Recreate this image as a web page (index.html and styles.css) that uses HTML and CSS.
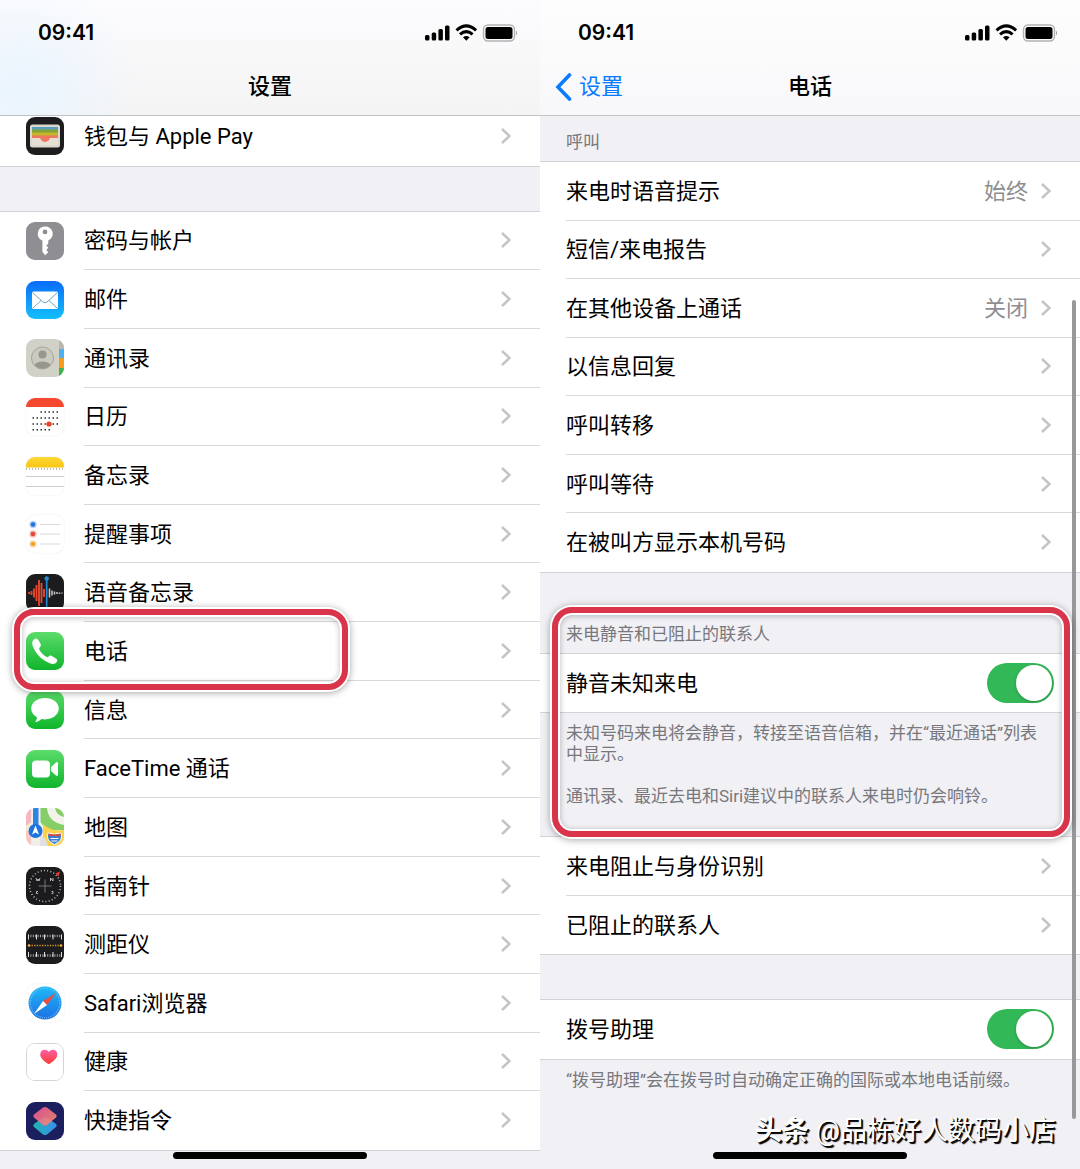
FILE: index.html
```html
<!DOCTYPE html>
<html lang="zh-CN">
<head>
    <meta charset="UTF-8">
    <meta name="viewport" content="width=device-width, initial-scale=1.0">
    <title>设置 - 电话</title>
    <link rel="stylesheet" href="styles.css">
</head>
<body>
    <!-- Shared symbols -->
    <svg class="defs" width="0" height="0" aria-hidden="true">
        <defs>
            <linearGradient id="green" x1="0" y1="0" x2="0" y2="1">
                <stop offset="0" stop-color="#5bdc6b"/>
                <stop offset="1" stop-color="#0fb52c"/>
            </linearGradient>
            <linearGradient id="blue" x1="0" y1="0" x2="0" y2="1">
                <stop offset="0" stop-color="#0a6cf9"/>
                <stop offset="1" stop-color="#13c0fd"/>
            </linearGradient>
            <linearGradient id="safari" x1="0" y1="0" x2="0" y2="1">
                <stop offset="0" stop-color="#1fb9f8"/>
                <stop offset="1" stop-color="#1c70e4"/>
            </linearGradient>
            <linearGradient id="heart" x1="0" y1="0" x2="0" y2="1">
                <stop offset="0" stop-color="#fb5fa6"/>
                <stop offset="1" stop-color="#fc3c2f"/>
            </linearGradient>
            <linearGradient id="layer-top" x1="0" y1="0" x2="1" y2="1">
                <stop offset="0" stop-color="#f0559a"/>
                <stop offset="1" stop-color="#f68e6a"/>
            </linearGradient>
            <linearGradient id="layer-bottom" x1="0" y1="0" x2="1" y2="0">
                <stop offset="0" stop-color="#1fb5b0"/>
                <stop offset="1" stop-color="#3b8df0"/>
            </linearGradient>
            <linearGradient id="yellow" x1="0" y1="0" x2="0" y2="1">
                <stop offset="0" stop-color="#fdd835"/>
                <stop offset="1" stop-color="#f9c514"/>
            </linearGradient>
        </defs>
        <symbol id="chevron" viewBox="0 0 12 18">
            <path d="M2 2l7.500 7L2 16" fill="none" stroke="#c4c4c7" stroke-width="2.400"/>
        </symbol>
        <symbol id="status" viewBox="0 0 92 18">
            <rect x="0" y="11" width="4.500" height="5.500" rx="1.500"/>
            <rect x="6.700" y="8.500" width="4.500" height="8" rx="1.500"/>
            <rect x="13.400" y="5" width="4.500" height="11.500" rx="1.500"/>
            <rect x="20" y="1.500" width="4.500" height="15" rx="1.500"/>
            <path d="M31.500 6.300q9.800-8.800 19.600 0M35 10.400q6.300-5.600 12.600 0" fill="none" stroke="#000" stroke-width="3"/>
            <path d="M38 13.300q3.300-2.800 6.600 0l-3.300 3.400z"/>
            <rect x="58.500" y="1" width="31" height="16" rx="4.500" fill="none" stroke="#b2b2b5" stroke-width="1.400"/>
            <rect x="60.500" y="3" width="27" height="12" rx="2.500"/>
            <path d="M91 6.500q2 2.500 0 5z" fill="#9b9b9e"/>
        </symbol>
    </svg>

    <div class="screens">
        <section class="phone">
            <header class="nav nav-tinted">
                <div class="status">
                    <span>09:41</span>
                    <svg class="status-icons"><use href="#status"/></svg>
                </div>
                <div class="title-bar">
                    <h1>设置</h1>
                </div>
            </header>

            <a class="row row-under" href="#">
                <svg class="icon" viewBox="0 0 38 38">
                    <rect width="38" height="38" fill="#1d1c1e"/>
                    <rect x="4" y="7.500" width="30" height="23" rx="2.500" fill="#dcd8cf"/>
                    <path d="M6 10h26v4H6z" fill="#5aa0bd"/>
                    <path d="M6 12.500h26V17H6z" fill="#85a33a"/>
                    <path d="M6 15.500h26V20H6z" fill="#c5b52b"/>
                    <path d="M6 18.500h26v2.500h-8q-1 4-5 4t-5-4H6z" fill="#f0765f"/>
                    <path d="M6 21h8q1 4 5 4t5-4h8v7H6z" fill="#e6dfd4"/>
                </svg>
                <span class="row-body"><span class="label">钱包与 Apple Pay</span><svg class="chevron"><use href="#chevron"/></svg></span>
            </a>

            <div class="gap"></div>

            <a class="row" href="#">
                <svg class="icon" viewBox="0 0 38 38">
                    <rect width="38" height="38" fill="#8e8e93"/>
                    <path fill="#fff" fill-rule="evenodd" d="M19 4.500a7.300 7.300 0 0 0-2.600 14.100V30l2.800 3.200 3.100-3-2-2.200 2-2.200-2-2.300 2-2v-3A7.300 7.300 0 0 0 19 4.500zm0 3a2.400 2.400 0 1 1 0 4.800 2.400 2.400 0 0 1 0-4.800z"/>
                </svg>
                <span class="row-body"><span class="label">密码与帐户</span><svg class="chevron"><use href="#chevron"/></svg></span>
            </a>
            <a class="row" href="#">
                <svg class="icon" viewBox="0 0 38 38">
                    <rect width="38" height="38" fill="url(#blue)"/>
                    <rect x="6" y="10.500" width="26" height="17.500" rx="1.500" fill="#fff"/>
                    <path d="M6.500 11.500l10.500 9.500q2 1.600 4 0l10.500-9.500M6.500 27.500l8.500-8M31.500 27.500l-8.500-8" fill="none" stroke="#6aa5c4" stroke-width="1"/>
                </svg>
                <span class="row-body"><span class="label">邮件</span><svg class="chevron"><use href="#chevron"/></svg></span>
            </a>
            <a class="row" href="#">
                <svg class="icon" viewBox="0 0 38 38">
                    <rect width="38" height="38" fill="#d2d1c7"/>
                    <path d="M33 0h5v10h-5z" fill="#b9b8ae"/>
                    <path d="M33 10h5v9h-5z" fill="#4fb0ef"/>
                    <path d="M33 19h5v10h-5z" fill="#f79a1d"/>
                    <path d="M33 29h5v9h-5z" fill="#3fb54e"/>
                    <circle cx="16.500" cy="19" r="11" fill="#cbcac0" stroke="#a5a49c"/>
                    <circle cx="16.500" cy="15.500" r="4" fill="#98978f"/>
                    <path d="M8.500 26q2-3.500 8-3.500t8 3.500q-3 3.700-8 3.700T8.500 26z" fill="#98978f"/>
                </svg>
                <span class="row-body"><span class="label">通讯录</span><svg class="chevron"><use href="#chevron"/></svg></span>
            </a>
            <a class="row" href="#">
                <svg class="icon icon-light" viewBox="0 0 38 38">
                    <rect width="38" height="38" fill="#fff"/>
                    <path d="M0 0h38v9H0z" fill="#f5482f"/>
                    <path d="M14.500 14H32M6.500 20H32M6.500 26H32M6.500 31.800H24" stroke="#2a2a2a" stroke-width="1.500" stroke-dasharray="1.500 2.500" fill="none"/>
                    <path d="M18 26h9" stroke="#f0957f"/>
                    <circle cx="23" cy="26" r="2.600" fill="#e8432c"/>
                </svg>
                <span class="row-body"><span class="label">日历</span><svg class="chevron"><use href="#chevron"/></svg></span>
            </a>
            <a class="row" href="#">
                <svg class="icon icon-light" viewBox="0 0 38 38">
                    <rect width="38" height="38" fill="#fff"/>
                    <path d="M0 0h38v10.500H0z" fill="url(#yellow)"/>
                    <path d="M0 12h38" stroke="#a9a69b" stroke-width="1.500" stroke-dasharray="1 2"/>
                    <path d="M0 19.500h38M0 29.500h38" stroke="#cfcfcf"/>
                </svg>
                <span class="row-body"><span class="label">备忘录</span><svg class="chevron"><use href="#chevron"/></svg></span>
            </a>
            <a class="row" href="#">
                <svg class="icon icon-light" viewBox="0 0 38 38">
                    <rect width="38" height="38" fill="#fff"/>
                    <path d="M14 9.500h20M14 19h20M14 29h20" stroke="#d8d8da"/>
                    <circle cx="7" cy="9.500" r="3.700" fill="#b7d3f5"/>
                    <circle cx="7" cy="9.500" r="2.300" fill="#2472d8"/>
                    <circle cx="7" cy="19" r="3.700" fill="#f6c2bb"/>
                    <circle cx="7" cy="19" r="2.300" fill="#e14a3a"/>
                    <circle cx="7" cy="29" r="3.700" fill="#fae0b4"/>
                    <circle cx="7" cy="29" r="2.300" fill="#f0a32f"/>
                </svg>
                <span class="row-body"><span class="label">提醒事项</span><svg class="chevron"><use href="#chevron"/></svg></span>
            </a>
            <a class="row" href="#">
                <svg class="icon" viewBox="0 0 38 38">
                    <rect width="38" height="38" fill="#1c1c1e"/>
                    <path d="M3 18v2M5.500 17v4M8 14.500v9M10.500 11v16M13 6v26M15.500 9v20M18 15v8" stroke="#e4472f" stroke-width="1.900"/>
                    <path d="M23.500 14.500v9M26 16.500v5M28.500 17.500v3M31 18v2M33.500 18.500v1.500M36 18.500v1" stroke="#c9c9cc" stroke-width="1.500"/>
                    <path d="M20.700 4v34" stroke="#2589d6" stroke-width="1.700"/>
                    <circle cx="20.700" cy="4.500" r="2.200" fill="#2589d6"/>
                </svg>
                <span class="row-body"><span class="label">语音备忘录</span><svg class="chevron"><use href="#chevron"/></svg></span>
            </a>
            <a class="row" href="#">
                <svg class="icon" viewBox="0 0 38 38">
                    <rect width="38" height="38" fill="url(#green)"/>
                    <path fill="#fff" d="M8 7.200c1.500-1.300 3.300-1 4.300.7l2.300 4.200c.7 1.300.2 2.200-.8 3.200-.9.900-.8 1.800-.1 3 1.300 2.200 3.400 4.400 5.700 6 1.300.9 2.300 1 3.200.1 1-1 1.900-1.300 3.200-.5l4.200 2.700c1.500 1 1.600 2.500.4 3.900-1.900 2-4.300 1.700-7.200.4C15 27.500 9.200 21 6.800 14c-.8-2.600-1-5 1.200-6.800z"/>
                </svg>
                <span class="row-body"><span class="label">电话</span><svg class="chevron"><use href="#chevron"/></svg></span>
                <span class="highlight highlight-phone"></span>
            </a>
            <a class="row" href="#">
                <svg class="icon" viewBox="0 0 38 38">
                    <rect width="38" height="38" fill="url(#green)"/>
                    <path fill="#fff" d="M19 7C11.300 7 5.200 11.600 5.200 17.600c0 3.700 2.200 6.800 5.800 8.700 0 1.900-.8 3.500-2 4.700 2.700-.2 4.900-1.300 6.300-3 1.200.3 2.400.4 3.700.4 7.700 0 13.800-4.800 13.800-10.800S26.700 7 19 7z"/>
                </svg>
                <span class="row-body"><span class="label">信息</span><svg class="chevron"><use href="#chevron"/></svg></span>
            </a>
            <a class="row" href="#">
                <svg class="icon" viewBox="0 0 38 38">
                    <rect width="38" height="38" fill="url(#green)"/>
                    <rect x="6" y="10.500" width="18" height="17" rx="4" fill="#fff"/>
                    <path d="M25 17l5-4.500q2-1.200 2 1v11q0 2.200-2 1L25 21z" fill="#fff"/>
                </svg>
                <span class="row-body"><span class="label">FaceTime 通话</span><svg class="chevron"><use href="#chevron"/></svg></span>
            </a>
            <a class="row" href="#">
                <svg class="icon" viewBox="0 0 38 38">
                    <rect width="38" height="38" fill="#f1efe8"/>
                    <path d="M0 0h6v38H0z" fill="#f4ead0"/>
                    <path d="M0 3l5-3v14l-5 4z" fill="#f3b9c0"/>
                    <path d="M0 22l5 3v13H0z" fill="#f7c8c4"/>
                    <path d="M14.500 0H38v22H20L14.500 14z" fill="#86cf68"/>
                    <path d="M21 0h8q1 7 9 9v8Q22 14 21 0z" fill="#f4f3ea"/>
                    <path d="M17 16q8 8 21 6v16H17z" fill="#fbd04a"/>
                    <path d="M14 26q6 3 8 12h-8z" fill="#dfe0df"/>
                    <path d="M7 0h5.500v22H7z" fill="#2d83e6"/>
                    <circle cx="9.500" cy="23" r="7" fill="#1f74dc"/>
                    <path d="M9.500 17.500l3.500 9-3.500-2-3.500 2z" fill="#fff"/>
                    <path d="M22 25q6.500 2.500 13 0 2.500 8-6.500 11.500Q19.500 33 22 25z" fill="#3a7fd0" stroke="#fff"/>
                    <path d="M22.500 25.500q6 2 12 0v2.500h-12z" fill="#d9483b"/>
                    <path d="M24.500 30.500h8M25.500 33h6" stroke="#fff"/>
                </svg>
                <span class="row-body"><span class="label">地图</span><svg class="chevron"><use href="#chevron"/></svg></span>
            </a>
            <a class="row" href="#">
                <svg class="icon" viewBox="0 0 38 38">
                    <rect width="38" height="38" fill="#1b1b1d"/>
                    <circle cx="19" cy="19" r="15.500" fill="none" stroke="#bdbdc0" stroke-width="1.500" stroke-dasharray="1 2.250"/>
                    <path d="M19 12.500v13M12.500 19h13" stroke="#77777a"/>
                    <path d="M10 11l1 3 1-2 1 2 1-3M24.500 14v-3l2.500 3v-3M12 24.500h-1.500v2H12M25.500 24.500h1.500v2h-1.500" fill="none" stroke="#c9c9cc" stroke-width=".9"/>
                    <path d="M29.500 6.500l4.500-2-1.500 5z" fill="#e8412f"/>
                </svg>
                <span class="row-body"><span class="label">指南针</span><svg class="chevron"><use href="#chevron"/></svg></span>
            </a>
            <a class="row" href="#">
                <svg class="icon" viewBox="0 0 38 38">
                    <rect width="38" height="38" fill="#1c1c1e"/>
                    <path d="M2 10h34M2 29.500h34" stroke="#a9a9ac" stroke-width="2.500" stroke-dasharray="1 1.400"/>
                    <path d="M2.500 8.500v5M10.500 8.500v5M18.500 8.500v5M27 8.500v5M35.500 8.500v5M2.500 26v5M10.500 26v5M18.500 26v5M27 26v5M35.500 26v5" stroke="#dededf"/>
                    <path d="M3 19.500h32" stroke="#d99a2b" stroke-width="1.300" stroke-dasharray="1.300 1.300"/>
                    <circle cx="3" cy="19.500" r="1.300" fill="#f6b133"/>
                    <circle cx="35" cy="19.500" r="1.300" fill="#f6b133"/>
                </svg>
                <span class="row-body"><span class="label">测距仪</span><svg class="chevron"><use href="#chevron"/></svg></span>
            </a>
            <a class="row" href="#">
                <svg class="icon icon-light" viewBox="0 0 38 38">
                    <rect width="38" height="38" fill="#fff"/>
                    <circle cx="19" cy="19" r="16.500" fill="url(#safari)"/>
                    <circle cx="19" cy="19" r="14.800" fill="none" stroke="#8fd0f8" stroke-width="1.500" stroke-dasharray=".6 1.340"/>
                    <path d="M30 9L17 17l4 4z" fill="#ef4b3e"/>
                    <path d="M8 30l9-13 4 4z" fill="#fff"/>
                </svg>
                <span class="row-body"><span class="label">Safari浏览器</span><svg class="chevron"><use href="#chevron"/></svg></span>
            </a>
            <a class="row" href="#">
                <svg class="icon icon-health" viewBox="0 0 38 38">
                    <rect width="38" height="38" fill="#fff"/>
                    <path d="M23 21.500C17 17.500 14 14.500 14 11c0-3 2-5 4.600-5 1.800 0 3.400.9 4.400 2.500C24 6.900 25.600 6 27.400 6 30 6 32 8 32 11c0 3.500-3 6.500-9 10.500z" fill="url(#heart)"/>
                </svg>
                <span class="row-body"><span class="label">健康</span><svg class="chevron"><use href="#chevron"/></svg></span>
            </a>
            <a class="row row-last" href="#">
                <svg class="icon" viewBox="0 0 38 38">
                    <rect width="38" height="38" fill="#1b1f5e"/>
                    <path d="M17 15.500q2-1 4 0l9 6.500q1.500 1.500 0 3l-9 7.500q-2 1.200-4 0L8 25q-1.500-1.500 0-3z" fill="url(#layer-bottom)"/>
                    <path d="M17 5.500q2-1 4 0l9 7q1.500 1.500 0 3L21 23q-2 1.200-4 0l-9-7.500q-1.500-1.500 0-3z" fill="url(#layer-top)" opacity=".9"/>
                </svg>
                <span class="row-body"><span class="label">快捷指令</span><svg class="chevron"><use href="#chevron"/></svg></span>
            </a>

            <footer class="bottom bottom-short"></footer>
            <div class="home-bar"></div>
        </section>

        <section class="phone">
            <header class="nav">
                <div class="status">
                    <span>09:41</span>
                    <svg class="status-icons"><use href="#status"/></svg>
                </div>
                <div class="title-bar">
                    <a class="back" href="#">
                        <svg class="back-arrow" viewBox="0 0 18 28"><path d="M15.500 2L4 14l11.500 12" fill="none" stroke="#0a7aff" stroke-width="3.600" stroke-linecap="round"/></svg>
                        <span>设置</span>
                    </a>
                    <h1>电话</h1>
                </div>
            </header>

            <h2 class="section-title">呼叫</h2>
            <a class="row" href="#"><span class="row-body"><span class="label">来电时语音提示</span><span class="value">始终</span><svg class="chevron"><use href="#chevron"/></svg></span></a>
            <a class="row" href="#"><span class="row-body"><span class="label">短信/来电报告</span><svg class="chevron"><use href="#chevron"/></svg></span></a>
            <a class="row" href="#"><span class="row-body"><span class="label">在其他设备上通话</span><span class="value">关闭</span><svg class="chevron"><use href="#chevron"/></svg></span></a>
            <a class="row" href="#"><span class="row-body"><span class="label">以信息回复</span><svg class="chevron"><use href="#chevron"/></svg></span></a>
            <a class="row" href="#"><span class="row-body"><span class="label">呼叫转移</span><svg class="chevron"><use href="#chevron"/></svg></span></a>
            <a class="row" href="#"><span class="row-body"><span class="label">呼叫等待</span><svg class="chevron"><use href="#chevron"/></svg></span></a>
            <a class="row row-last" href="#"><span class="row-body"><span class="label">在被叫方显示本机号码</span><svg class="chevron"><use href="#chevron"/></svg></span></a>

            <h2 class="section-title section-title-tall">来电静音和已阻止的联系人</h2>
            <div class="row row-last">
                <div class="row-body">
                    <label class="label" for="silence">静音未知来电</label>
                    <input class="switch" type="checkbox" id="silence" checked>
                </div>
                <span class="highlight highlight-silence"></span>
            </div>
            <div class="note note-silence">
                <p>未知号码来电将会静音，转接至语音信箱，并在“最近通话”列表中显示。</p>
                <p>通讯录、最近去电和Siri建议中的联系人来电时仍会响铃。</p>
            </div>

            <a class="row" href="#"><span class="row-body"><span class="label">来电阻止与身份识别</span><svg class="chevron"><use href="#chevron"/></svg></span></a>
            <a class="row row-last" href="#"><span class="row-body"><span class="label">已阻止的联系人</span><svg class="chevron"><use href="#chevron"/></svg></span></a>

            <div class="gap"></div>

            <div class="row row-last">
                <div class="row-body">
                    <label class="label" for="dial-assist">拨号助理</label>
                    <input class="switch" type="checkbox" id="dial-assist" checked>
                </div>
            </div>
            <footer class="note bottom">
                <p>“拨号助理”会在拨号时自动确定正确的国际或本地电话前缀。</p>
            </footer>

            <div class="scrollbar"></div>
            <div class="watermark"><b>头条</b> @品栋好人数码小店</div>
            <div class="home-bar"></div>
        </section>
    </div>
</body>
</html>
```
FILE: styles.css
```css
* {
    box-sizing: border-box;
}
body {
    margin: 0;
    background-color: #f0f0f5;
    color: #000;
    font-family: Roboto, "Noto Sans CJK SC", sans-serif;
    font-size: 22px;
    line-height: 30px;
}
a {
    color: inherit;
    text-decoration: none;
}
h1, h2, p {
    margin: 0;
}
.defs {
    position: absolute;
}
.screens {
    display: flex;
    min-height: 100vh;
}
.phone {
    position: relative;
    display: flex;
    flex: 1;
    flex-direction: column;
    min-width: 0;
    background-color: #f0f0f5;
    overflow: hidden;
}

/* Navigation bar */
.nav {
    position: relative;
    z-index: 2;
    height: 116px;
    border-bottom: 1px solid #c3c3c6;
    background: linear-gradient(#fdfdfe, #f8f8fa);
}
.nav-tinted {
    background: radial-gradient(circle at 4% 78%, #eaf5ff, rgba(234, 245, 255, 0) 22%), linear-gradient(#fcfcfe, #f4f4f5);
}
.status {
    display: flex;
    justify-content: space-between;
    align-items: center;
    height: 64px;
    padding: 2px 23px 0 38px;
    font-family: Inter, sans-serif;
    font-size: 21px;
    font-weight: 600;
}
.status-icons {
    width: 92px;
    height: 18px;
}
.title-bar {
    position: relative;
    display: flex;
    justify-content: center;
    align-items: center;
    height: 46px;
}
h1 {
    font-size: 22px;
    font-weight: 500;
}
.back {
    position: absolute;
    left: 14px;
    display: flex;
    align-items: center;
    gap: 7px;
    color: #0a7aff;
}
.back-arrow {
    width: 18px;
    height: 28px;
}

/* List rows */
.row {
    position: relative;
    display: flex;
    flex: 1 0 58px;
    align-items: center;
    gap: 20px;
    padding-left: 26px;
    background-color: #fff;
}
.row-under {
    margin-top: -9px;
}
.row-body {
    display: flex;
    flex: 1;
    align-self: stretch;
    align-items: center;
    gap: 12px;
    padding-right: 26px;
    border-bottom: 1px solid #d9d9dc;
}
.row-last .row-body,
.row-under .row-body {
    border-bottom-color: transparent;
}
.label {
    flex: 1;
    padding-top: 2px;
}
.value {
    padding-top: 2px;
    color: #8e8e92;
}
.chevron {
    width: 12px;
    height: 18px;
    margin-right: 2px;
}
.icon {
    flex: none;
    width: 38px;
    height: 38px;
    border-radius: 9px;
}
.icon-light {
    box-shadow: 0 0 1px #c8c8ca;
}
.icon-health {
    border: 1px solid #d5d5d8;
}
.gap {
    height: 46px;
    border-top: 1px solid #d3d3d7;
    border-bottom: 1px solid #d3d3d7;
}
.section-title {
    display: flex;
    align-items: flex-end;
    height: 46px;
    padding: 0 26px 8px;
    border-bottom: 1px solid #d3d3d7;
    color: #77777c;
    font-size: 17px;
    font-weight: 400;
    line-height: 21px;
}
.section-title-tall {
    height: 82px;
    border-top: 1px solid #d3d3d7;
}
.note {
    padding: 10px 26px 0;
    border-top: 1px solid #d3d3d7;
    color: #77777c;
    font-size: 17px;
    line-height: 21px;
}
.note p + p {
    margin-top: 21px;
}
.note-silence {
    padding-bottom: 29px;
    border-bottom: 1px solid #d3d3d7;
}
.bottom {
    height: 110px;
}
.bottom-short {
    height: 19px;
    border-top: 1px solid #d3d3d7;
}

/* Switch */
.switch {
    appearance: none;
    display: flex;
    width: 67px;
    height: 40px;
    margin: 0;
    padding: 2px;
    border-radius: 20px;
    background-color: #d9d9dc;
    cursor: pointer;
}
.switch::before {
    content: "";
    width: 36px;
    height: 36px;
    border-radius: 50%;
    background-color: #fff;
    box-shadow: 0 1px 3px rgba(0, 0, 0, 0.25);
}
.switch:checked {
    justify-content: flex-end;
    background-color: #33b857;
}

/* Red marker frames */
.highlight {
    position: absolute;
    z-index: 1;
    border: 6px solid #d93449;
    border-radius: 20px;
    box-shadow: 0 0 0 2px #fff, 0 1px 7px 2px rgba(0, 0, 0, 0.35), inset 0 0 0 2px #fff, inset 0 1px 5px 3px rgba(0, 0, 0, 0.2);
    pointer-events: none;
}
.highlight-phone {
    top: -13px;
    bottom: -9px;
    left: 14px;
    width: 334px;
}
.highlight-silence {
    top: -47px;
    right: 10px;
    bottom: -125px;
    left: 12px;
}

/* Overlays */
.scrollbar {
    position: absolute;
    top: 300px;
    right: 4px;
    bottom: 50px;
    width: 4px;
    border-radius: 2px;
    background-color: #98989b;
}
.home-bar {
    position: absolute;
    bottom: 10px;
    left: 50%;
    width: 194px;
    height: 7px;
    margin-left: -97px;
    border-radius: 4px;
    background-color: #000;
}
.watermark {
    position: absolute;
    right: 24px;
    bottom: 20px;
    color: #fff;
    font-size: 27px;
    line-height: 36px;
    text-shadow: 1px 1px 0 #000, 2px 2px 1px #000;
}
```
